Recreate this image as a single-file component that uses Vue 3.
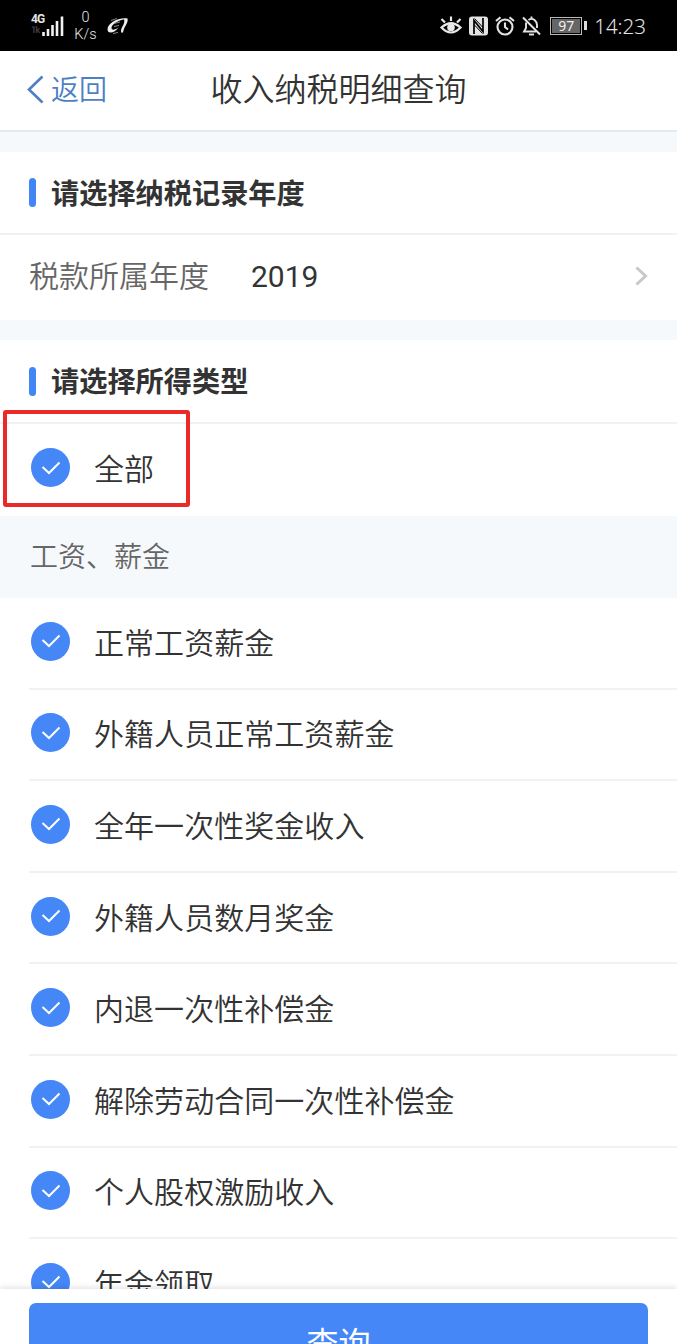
<template>
  <div class="page">
    <div class="status-bar">
      <div class="signal">
        <div class="net">
          <span>4G</span>
          <span class="net-sub">1k</span>
        </div>
        <svg class="bars" width="22" height="20" viewBox="0 0 22 20">
          <path d="M1.500 16v4M6 13v7M10.500 9v11M15 5v15M20 0.500v19.500" stroke="#f2f2f2" stroke-width="2.600" />
        </svg>
      </div>
      <div class="speed">
        <span>0</span>
        <span>K/s</span>
      </div>
      <svg class="app-logo" width="24" height="20" viewBox="0 0 24 20">
        <path d="M2.500 16C-2 10 10 1 21.500 2.500C13 4 5.500 8 5.500 12C5.500 14.500 9 14 12.500 11.500C10 15.500 5 17.500 2.500 16Z" fill="#eee" />
        <path d="M18 3L21.500 2.500C22.500 7 18.500 10 17.500 14.500C17 17.500 15 17.500 15 15C15 11 19.500 8 18 3Z" fill="#eee" />
        <path d="M5 4.500l6-2M8 7.500l6-1.500M8 10.500l5-1M7 17.500l5-1" stroke="#888" stroke-width="1" />
      </svg>
      <div class="status-right">
        <svg width="22" height="20" viewBox="0 0 22 20" fill="none" stroke="#e8e8e8" stroke-width="2.200">
          <path d="M1.500 11.500Q11 3 20.500 11.500Q11 21.500 1.500 11.500Z" />
          <path d="M11 5V0.500M5 6.500L1.500 3M17 6.500L20.500 3" />
          <circle cx="11" cy="11.500" r="3.800" fill="#e8e8e8" stroke="none" />
        </svg>
        <svg width="19" height="20" viewBox="0 0 19 20">
          <rect x="0" y="0.500" width="19" height="19" rx="3" fill="#e4e4e4" />
          <path d="M5 18V4.500L14 15.500V2" fill="none" stroke="#000" stroke-width="1.700" />
          <path d="M5.500 2.500L14 11.500M5 8.500L13.500 17.500" stroke="#000" stroke-width="1" />
        </svg>
        <svg width="20" height="20" viewBox="0 0 20 20" fill="none" stroke="#e4e4e4" stroke-width="2.100">
          <circle cx="10" cy="11" r="7.500" />
          <path d="M10 6.500V11L13 13.500M1 5L5.500 1.200M19 5L14.500 1.200" />
        </svg>
        <svg width="19" height="20" viewBox="0 0 19 20" fill="none" stroke="#e4e4e4" stroke-width="1.900">
          <path d="M4 6.500V12L2 15.500H14M6.500 4Q9.500 1.500 12.500 4Q15 6 15 9V12M9.500 3V0.500" />
          <path d="M1 1.500L18 18.500" />
          <path d="M7 18.500h5" />
        </svg>
        <div class="battery">
          <span class="battery-level">97</span>
          <span class="battery-tip"></span>
        </div>
        <span class="clock">14:23</span>
      </div>
    </div>

    <header class="nav-bar">
      <div class="back">
        <svg width="17" height="29" viewBox="0 0 17 29">
          <path d="M15.500 1.500L2 14.500L15.500 27.500" fill="none" stroke="#4d7fc4" stroke-width="2.600" />
        </svg>
        <span>返回</span>
      </div>
      <h1 class="title">收入纳税明细查询</h1>
    </header>

    <section class="card year-card">
      <h2 class="card-title"><span>请选择纳税记录年度</span></h2>
      <div class="year-row">
        <span class="year-label">税款所属年度</span>
        <span class="year-value">{{ year }}</span>
        <svg class="arrow" width="13" height="20" viewBox="0 0 13 20">
          <path d="M1.500 1.500L10.500 10L1.500 18.500" fill="none" stroke="#c8c8c8" stroke-width="3" />
        </svg>
      </div>
    </section>

    <section class="card type-card">
      <h2 class="card-title"><span>请选择所得类型</span></h2>
      <div class="all-row" @click="toggleAll">
        <span class="check" :class="{ off: !allChecked }">
          <svg width="20" height="14" viewBox="0 0 20 14">
            <path d="M1.500 6L8 12L18.500 1.500" fill="none" stroke="#fff" stroke-width="2" />
          </svg>
        </span>
        <span class="all-text">全部</span>
        <div class="highlight"></div>
      </div>
      <div class="group-title">工资、薪金</div>
      <ul class="type-list">
        <li v-for="item in types" :key="item.name" class="type-row" @click="item.checked = !item.checked">
          <span class="check" :class="{ off: !item.checked }">
            <svg width="20" height="14" viewBox="0 0 20 14">
              <path d="M1.500 6L8 12L18.500 1.500" fill="none" stroke="#fff" stroke-width="2" />
            </svg>
          </span>
          <span class="type-name">{{ item.name }}</span>
        </li>
      </ul>
    </section>

    <footer class="footer">
      <button class="query-btn">查询</button>
    </footer>
  </div>
</template>

<script setup>
import { ref, computed } from 'vue';

const year = ref('2019');

const types = ref([
  { name: '正常工资薪金', checked: true },
  { name: '外籍人员正常工资薪金', checked: true },
  { name: '全年一次性奖金收入', checked: true },
  { name: '外籍人员数月奖金', checked: true },
  { name: '内退一次性补偿金', checked: true },
  { name: '解除劳动合同一次性补偿金', checked: true },
  { name: '个人股权激励收入', checked: true },
  { name: '年金领取', checked: true }
]);

const allChecked = computed(() => types.value.every((item) => item.checked));

const toggleAll = () => {
  const next = !allChecked.value;
  types.value.forEach((item) => {
    item.checked = next;
  });
};
</script>

<style>
body {
  margin: 0;
  overflow: hidden;
}
</style>

<style scoped>
.page {
  display: flex;
  flex-direction: column;
  width: 677px;
  height: 1344px;
  overflow: hidden;
  background: #f5f9fc;
  color: #333;
  font-family: Roboto, "Noto Sans CJK SC", sans-serif;
  font-size: 30px;
  font-weight: 350;
}

.status-bar {
  flex: none;
  display: flex;
  align-items: center;
  box-sizing: border-box;
  height: 51px;
  padding: 0 31px;
  background: #000;
  color: #e4e4e4;
}

.signal {
  display: flex;
  align-items: flex-end;
  width: 43px;
  margin-top: -2px;
}

.net {
  display: flex;
  flex-direction: column;
  width: 11px;
  font-size: 12px;
  line-height: 11px;
  font-weight: 700;
  letter-spacing: -1px;
}

.net-sub {
  color: #3c3c3c;
  font-size: 9px;
}

.speed {
  display: flex;
  flex-direction: column;
  align-items: center;
  width: 23px;
  margin-top: 1px;
  font-size: 14.500px;
  line-height: 17px;
}

.app-logo {
  margin: 0 0 0 9px;
}

.status-right {
  display: flex;
  align-items: center;
  margin-left: auto;
  gap: 7px;
}

.battery {
  display: flex;
  align-items: center;
  gap: 2px;
  margin-left: 2px;
}

.battery-level {
  box-sizing: border-box;
  width: 32px;
  height: 18px;
  border: 1px solid #bbb;
  box-shadow: inset 0 0 0 1px #000;
  background: #666;
  color: #eee;
  font-family: "Noto Sans", sans-serif;
  font-size: 14px;
  font-weight: 400;
  line-height: 16px;
  text-align: center;
}

.battery-tip {
  width: 3px;
  height: 9px;
  background: #ddd;
}

.clock {
  font-family: "Noto Sans", sans-serif;
  font-size: 20.500px;
  font-weight: 350;
}

.nav-bar {
  flex: none;
  display: grid;
  grid-template-columns: 1fr auto 1fr;
  align-items: center;
  box-sizing: border-box;
  height: 81px;
  padding: 0 27px 3px;
  border-bottom: 2px solid #e1eaf1;
  background: #fff;
}

.back {
  display: flex;
  align-items: center;
  gap: 7px;
  color: #4d7fc4;
  font-size: 28px;
}

.back span {
  padding-bottom: 2px;
}

.title {
  margin: 0;
  padding-bottom: 5px;
  font-size: 32px;
  font-weight: 350;
}

.card {
  flex: none;
  background: #fff;
}

.year-card {
  margin-top: 20px;
}

.type-card {
  margin-top: 20px;
}

.card-title {
  display: flex;
  align-items: center;
  box-sizing: border-box;
  height: 83px;
  margin: 0;
  padding-left: 29px;
  border-bottom: 2px solid #f1f1f1;
  font-size: 28.200px;
  font-weight: 700;
}

.card-title span {
  padding-bottom: 3px;
}

.type-card .card-title {
  height: 84px;
}

.card-title::before {
  content: "";
  width: 7px;
  height: 29px;
  margin-right: 15px;
  border-radius: 4px;
  background: #4285f4;
}

.year-row {
  display: flex;
  align-items: center;
  box-sizing: border-box;
  height: 85px;
  padding: 0 29px 4px;
}

.year-label {
  width: 222px;
  padding-bottom: 4px;
  color: #666;
}

.year-value {
  padding-top: 2px;
  font-weight: 400;
}

.arrow {
  margin-left: auto;
}

.all-row {
  position: relative;
  display: flex;
  align-items: center;
  box-sizing: border-box;
  height: 92px;
  padding: 0 0 5px 31px;
}

.all-text {
  padding-bottom: 2px;
}

.highlight {
  position: absolute;
  top: -14px;
  left: 3px;
  box-sizing: border-box;
  width: 187px;
  height: 97px;
  border: 4px solid #ea2a2a;
  border-radius: 3px;
}

.check {
  display: flex;
  align-items: center;
  justify-content: center;
  flex: none;
  width: 39px;
  height: 39px;
  margin-right: 24px;
  border-radius: 50%;
  background: #4587f7;
}

.check.off {
  background: #ccc;
}

.group-title {
  box-sizing: border-box;
  height: 82px;
  padding-left: 30px;
  background: #f5f9fc;
  color: #666;
  font-size: 28px;
  line-height: 83px;
}

.type-list {
  margin: 0;
  padding: 0 0 0 29px;
  list-style: none;
}

.type-row {
  display: flex;
  align-items: center;
  box-sizing: border-box;
  height: 91.600px;
  padding: 0 0 3px 2px;
  border-bottom: 2px solid #f2f2f2;
}

.type-name {
  padding-bottom: 1px;
  letter-spacing: 0.050px;
}

.footer {
  position: fixed;
  top: 1289px;
  left: 0;
  box-sizing: border-box;
  width: 677px;
  height: 100px;
  padding: 14px 29px 0;
  background: #fff;
  box-shadow: 0 -2px 5px rgba(0, 0, 0, 0.1);
}

.query-btn {
  display: block;
  width: 100%;
  height: 76px;
  padding: 0;
  border: none;
  border-radius: 7px;
  background: #4587f7;
  color: #fff;
  font-family: inherit;
  font-size: 32px;
}
</style>
